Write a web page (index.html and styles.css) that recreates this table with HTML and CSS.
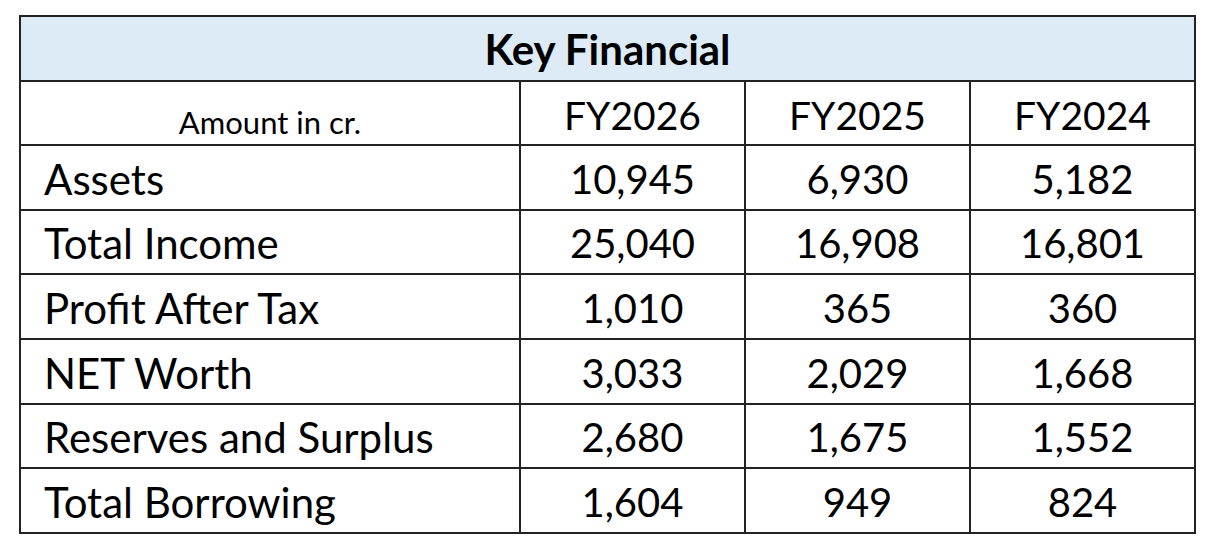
FILE: index.html
```html
<!DOCTYPE html>
<html lang="en">
<head>
<meta charset="utf-8">
<title>Key Financial</title>
<link rel="stylesheet" href="styles.css">
</head>
<body>
<table class="fin">
  <colgroup>
    <col class="c-label">
    <col class="c-year">
    <col class="c-year">
    <col class="c-year">
  </colgroup>
  <thead>
    <tr class="r-title"><th colspan="4" class="title">Key Financial</th></tr>
    <tr class="r-head">
      <th class="unit">Amount in cr.</th>
      <th class="year">FY2026</th>
      <th class="year">FY2025</th>
      <th class="year">FY2024</th>
    </tr>
  </thead>
  <tbody>
    <tr><td class="label">Assets</td><td class="num">10,945</td><td class="num">6,930</td><td class="num">5,182</td></tr>
    <tr><td class="label">Total Income</td><td class="num">25,040</td><td class="num">16,908</td><td class="num">16,801</td></tr>
    <tr><td class="label">Profit After Tax</td><td class="num">1,010</td><td class="num">365</td><td class="num">360</td></tr>
    <tr><td class="label">NET Worth</td><td class="num">3,033</td><td class="num">2,029</td><td class="num">1,668</td></tr>
    <tr><td class="label">Reserves and Surplus</td><td class="num">2,680</td><td class="num">1,675</td><td class="num">1,552</td></tr>
    <tr><td class="label">Total Borrowing</td><td class="num">1,604</td><td class="num">949</td><td class="num">824</td></tr>
  </tbody>
</table>
</body>
</html>
```
FILE: styles.css
```css
html, body {
  margin: 0;
  padding: 0;
  background: #ffffff;
}
body {
  padding: 15px 0 0 19px;
  font-family: Lato, "Liberation Sans", sans-serif;
  color: #000000;
}
.fin {
  border-collapse: collapse;
  table-layout: fixed;
  width: 1177px;
}
.c-label { width: 500px; }
.c-year { width: 225px; }
.fin th,
.fin td {
  border: 2px solid #222222;
  padding: 0;
  height: 64.6px;
  box-sizing: border-box;
  font-weight: 400;
  font-size: 40px;
  line-height: 1;
  white-space: nowrap;
}
.title {
  background: #ddebf7;
  font-weight: 700 !important;
  font-size: 42px !important;
  text-align: center;
  vertical-align: middle;
  padding-top: 2px !important;
}
.r-head th {
  vertical-align: bottom;
  padding-bottom: 9px;
  text-align: center;
}
.year {
  font-size: 39px !important;
}
.unit {
  font-size: 31px !important;
  padding-bottom: 6px !important;
}
.label {
  text-align: left;
  padding-left: 23px !important;
  vertical-align: bottom;
  padding-bottom: 9px !important;
  font-size: 42px !important;
}
.num {
  text-align: center;
  vertical-align: bottom;
  padding-bottom: 10px !important;
}
```
